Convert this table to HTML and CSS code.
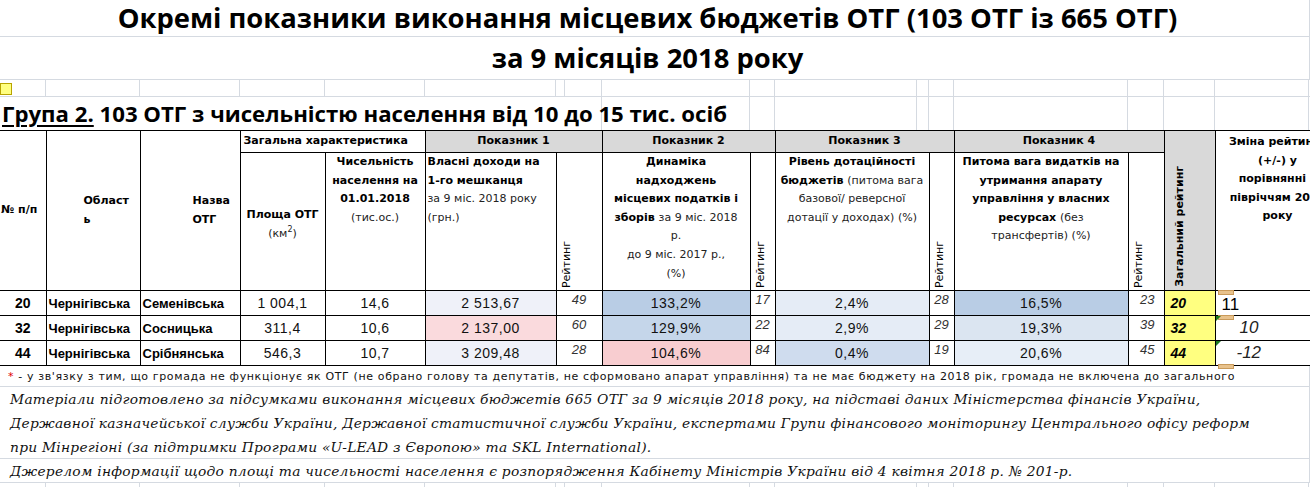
FILE: index.html
```html
<!DOCTYPE html>
<html lang="uk">
<head>
<meta charset="utf-8">
<title>Окремі показники виконання місцевих бюджетів ОТГ</title>
<link rel="stylesheet" href="styles.css">
</head>
<body>
<div class="sheet">
  <div class="title-row r1"><h1 class="title">Окремі показники виконання місцевих бюджетів ОТГ (103 ОТГ із 665 ОТГ)</h1></div>
  <div class="title-row r2"><h2 class="title">за 9 місяців 2018 року</h2></div>

  <div class="cols grid-row">
    <div class="gc"><span class="marker"></span></div><div class="gc"></div><div class="gc"></div><div class="gc"></div><div class="gc"></div><div class="gc"></div><div class="gc"></div><div class="gc"></div><div class="gc"></div><div class="gc"></div><div class="gc"></div><div class="gc"></div><div class="gc"></div><div class="gc"></div><div class="gc"></div><div class="gc"></div><div class="gc"></div><div class="gc last"></div>
  </div>

  <div class="cols group-row">
    <div class="gc group-text"><u>Група 2.</u> 103 ОТГ з чисельністю населення від 10 до 15 тис. осіб</div>
    <div class="gc"></div><div class="gc"></div><div class="gc"></div><div class="gc"></div><div class="gc"></div><div class="gc"></div><div class="gc"></div><div class="gc"></div><div class="gc"></div><div class="gc last"></div>
  </div>

  <table class="tbl">
    <colgroup>
      <col class="c-no"><col class="c-obl"><col class="c-name"><col class="c-area"><col class="c-pop">
      <col class="c-p1"><col class="c-r1"><col class="c-p2"><col class="c-r2"><col class="c-p3">
      <col class="c-r3"><col class="c-p4"><col class="c-r4"><col class="c-total"><col class="c-chg">
    </colgroup>
    <thead>
      <tr class="h1">
        <th rowspan="2" class="h-no">№ п/п</th>
        <th rowspan="2" class="h-obl">Област<br>ь</th>
        <th rowspan="2" class="h-name">Назва<br>ОТГ</th>
        <th colspan="2" class="h-gen">Загальна характеристика</th>
        <th colspan="2" class="h-grey">Показник 1</th>
        <th colspan="2" class="h-grey">Показник 2</th>
        <th colspan="2" class="h-grey">Показник 3</th>
        <th colspan="2" class="h-grey">Показник 4</th>
        <th rowspan="2" class="h-total"><div class="vert b">Загальний рейтинг</div></th>
        <th rowspan="2" class="h-chg">Зміна рейтингу<br>(+/-) у<br>порівнянні з<br>півріччям 2018<br>року</th>
      </tr>
      <tr class="h2">
        <th class="h-area">Площа ОТГ<br><span class="lt">(км<sup>2</sup>)</span></th>
        <th class="h-top">Чисельність<br>населення на<br>01.01.2018<br><span class="lt">(тис.ос.)</span></th>
        <th class="h-top h-left">Власні доходи на<br>1-го мешканця<br><span class="lt">за 9 міс. 2018 року<br>(грн.)</span></th>
        <th class="h-rt"><div class="vert">Рейтинг</div></th>
        <th class="h-top">Динаміка<br>надходжень<br>місцевих податків і<br>зборів <span class="lt">за 9 міс. 2018<br>р.<br>до 9 міс. 2017 р.,<br>(%)</span></th>
        <th class="h-rt"><div class="vert">Рейтинг</div></th>
        <th class="h-top">Рівень дотаційності<br>бюджетів <span class="lt">(питома вага<br>базової/ реверсної<br>дотації у доходах) (%)</span></th>
        <th class="h-rt"><div class="vert">Рейтинг</div></th>
        <th class="h-top">Питома вага видатків на<br>утримання апарату<br>управління у власних<br>ресурсах <span class="lt">(без<br>трансфертів) (%)</span></th>
        <th class="h-rt"><div class="vert">Рейтинг</div></th>
      </tr>
    </thead>
    <tbody>
      <tr>
        <td class="no">20</td><td class="obl">Чернігівська</td><td class="name">Семенівська</td>
        <td class="num">1 004,1</td><td class="num">14,6</td>
        <td class="num bg-lav">2 513,67</td><td class="rt">49</td>
        <td class="num bg-b1">133,2%</td><td class="rt">17</td>
        <td class="num bg-b3">2,4%</td><td class="rt">28</td>
        <td class="num bg-b1">16,5%</td><td class="rt rt4">23</td>
        <td class="total">20</td><td class="chg chg-plain"><span class="cmt"></span>11</td>
      </tr>
      <tr>
        <td class="no">32</td><td class="obl">Чернігівська</td><td class="name">Сосницька</td>
        <td class="num">311,4</td><td class="num">10,6</td>
        <td class="num bg-pink">2 137,00</td><td class="rt">60</td>
        <td class="num bg-b2">129,9%</td><td class="rt">22</td>
        <td class="num bg-b3">2,9%</td><td class="rt">29</td>
        <td class="num bg-b4">19,3%</td><td class="rt rt4">39</td>
        <td class="total">32</td><td class="chg chg-it"><span class="cmt"></span><span class="flag"></span>10</td>
      </tr>
      <tr>
        <td class="no">44</td><td class="obl">Чернігівська</td><td class="name">Срібнянська</td>
        <td class="num">546,3</td><td class="num">10,7</td>
        <td class="num bg-lav">3 209,48</td><td class="rt">28</td>
        <td class="num bg-pink2">104,6%</td><td class="rt">84</td>
        <td class="num bg-b5">0,4%</td><td class="rt">19</td>
        <td class="num bg-b6">20,6%</td><td class="rt rt4">45</td>
        <td class="total">44</td><td class="chg chg-it2"><span class="flag"></span>-12<span class="cmt cmt-low"></span></td>
      </tr>
    </tbody>
  </table>

  <div class="note note-star"><span class="star">*</span> - у зв'язку з тим, що громада не функціонує як ОТГ (не обрано голову та депутатів, не сформовано апарат управління) та не має бюджету на 2018 рік, громада не включена до загального</div>
  <div class="note note-main">Матеріали підготовлено за підсумками виконання місцевих бюджетів 665 ОТГ за 9 місяців 2018 року, на підставі даних Міністерства фінансів України,<br>Державної казначейської служби України, Державної статистичної служби України, експертами Групи фінансового моніторингу Центрального офісу реформ<br>при Мінрегіоні (за підтримки Програми «U-LEAD з Європою» та SKL International).</div>
  <div class="note note-src">Джерелом інформації щодо площі та чисельності населення є розпорядження Кабінету Міністрів України від 4 квітня 2018 р. № 201-р.</div>

  <div class="cols grid-row tail">
    <div class="gc"></div><div class="gc"></div><div class="gc"></div><div class="gc"></div><div class="gc"></div><div class="gc"></div><div class="gc"></div><div class="gc"></div><div class="gc"></div><div class="gc"></div><div class="gc"></div><div class="gc"></div><div class="gc"></div><div class="gc"></div><div class="gc"></div><div class="gc"></div><div class="gc"></div><div class="gc last"></div>
  </div>
</div>
</body>
</html>
```

FILE: styles.css
```css
* { box-sizing: border-box; }
html, body { margin: 0; padding: 0; background: #fff; }
body {
  width: 1310px;
  height: 487px;
  overflow: hidden;
  font-family: "DejaVu Sans", sans-serif;
  color: #000;
}
.sheet { width: 1310px; overflow: hidden; }

/* title rows */
.title-row {
  width: 1310px;
  display: flex;
  align-items: center;
  justify-content: center;
  padding-right: 14px;
  border-right: 1px solid #d5dae1;
  border-bottom: 1px solid #d5dae1;
}
.r1 { height: 37px; }
.r2 { height: 43px; }
.title {
  margin: 0;
  font-family: "Open Sans", sans-serif;
  font-weight: 700;
  font-size: 27.4px;
  line-height: 1;
  white-space: nowrap;
}

/* spreadsheet grid rows */
.cols {
  display: grid;
  grid-template-columns: 46px 94px 100px 85px 100px 131px 9px 37px 148px 25px 142px 12px 25px 174px 36px 51px 94px 1px;
}
.gc { border-right: 1px solid #d5dae1; position: relative; }
.gc.last { border-right: none; }
.grid-row { height: 17px; border-bottom: 1px solid #d5dae1; }
.grid-row.tail { height: 8px; border-bottom: none; }
.marker {
  position: absolute;
  left: 0;
  top: 3px;
  width: 12px;
  height: 12px;
  background: #ffff80;
  border: 1px solid #b8a400;
}
.group-row { height: 33px; }
.group-text {
  grid-column: 1 / 9;
  font-family: "Open Sans", sans-serif;
  font-weight: 700;
  font-size: 22.2px;
  line-height: 33px;
  padding-left: 2px;
  white-space: nowrap;
}
.group-text u { text-underline-offset: 3px; text-decoration-thickness: 2px; }

/* table */
.tbl {
  border-collapse: collapse;
  table-layout: fixed;
  width: 1340px;
}
.c-no { width: 46px; }
.c-obl { width: 94px; }
.c-name { width: 100px; }
.c-area { width: 85px; }
.c-pop { width: 100px; }
.c-p1 { width: 131px; }
.c-r1 { width: 46px; }
.c-p2 { width: 148px; }
.c-r2 { width: 25px; }
.c-p3 { width: 154px; }
.c-r3 { width: 25px; }
.c-p4 { width: 174px; }
.c-r4 { width: 36px; }
.c-total { width: 51px; }
.c-chg { width: 125px; }

.tbl th, .tbl td {
  border: 1px solid #000;
  padding: 0;
  overflow: hidden;
}
.tbl th:first-child, .tbl td:first-child { border-left: none; }
.tbl th {
  font-family: "DejaVu Sans", sans-serif;
  font-weight: 700;
  font-size: 11px;
  line-height: 18.6px;
}
.tbl .h1 { height: 22px; }
.tbl .h2 { height: 138px; }
.tbl .h-no { text-align: left; padding-left: 1px; }
.tbl .h-obl { text-align: left; padding-left: 37px; }
.tbl .h-name { text-align: left; padding-left: 52px; }
.tbl .h-gen { text-align: left; padding-left: 3px; white-space: nowrap; }
.tbl .h-grey { background: #d9d9d9; text-align: center; }
.tbl .h-total { background: #d9d9d9; vertical-align: bottom; text-align: left; padding: 0 0 3px 8px; }
.tbl .h-chg { vertical-align: top; text-align: center; padding-top: 2px; white-space: nowrap; }
.tbl .h-area { vertical-align: middle; text-align: center; padding-top: 6px; }
.tbl .h-top { vertical-align: top; text-align: center; }
.tbl .h-left { text-align: left; padding-left: 2px; }
.tbl .h-rt { vertical-align: bottom; text-align: left; padding: 0 0 2px 3px; }
.lt { font-weight: 400; color: #222; }
.lt sup { font-size: 8px; line-height: 0; }
.vert {
  writing-mode: vertical-rl;
  transform: rotate(180deg);
  font-weight: 400;
  white-space: nowrap;
  line-height: 14px;
}
.vert.b { font-weight: 700; }

.tbl tbody tr { height: 25px; }
.tbl td {
  font-family: "Liberation Sans", Arial, sans-serif;
  font-size: 14px;
  vertical-align: middle;
}
.tbl .no { font-weight: 700; text-align: center; }
.tbl .obl, .tbl .name {
  font-weight: 700;
  font-size: 13px;
  padding-left: 2px;
  white-space: nowrap;
}
.tbl .num { text-align: center; letter-spacing: 0.5px; color: #111; }
.tbl .rt {
  font-style: italic;
  font-size: 13px;
  color: #333;
  text-align: center;
  vertical-align: top;
  padding-top: 1px;
}
.tbl .rt4 { text-align: right; padding-right: 9px; }
.tbl .total {
  background: #ffff80;
  font-weight: 700;
  font-style: italic;
  padding-left: 6px;
}
.tbl .chg { position: relative; overflow: visible; }
.tbl .chg-plain { font-size: 17px; padding-left: 6px; vertical-align: bottom; line-height: 20px; }
.tbl .chg-it { font-style: italic; font-size: 17px; padding-left: 24px; color: #222; }
.tbl .chg-it2 { font-style: italic; font-size: 17px; padding-left: 21px; color: #222; }
.cmt {
  position: absolute;
  left: 2px;
  top: -1px;
  width: 16px;
  height: 5px;
  background: #e8c28c;
  border: 1px solid #c99a5a;
}
.cmt-low { top: auto; bottom: -4px; }
.flag {
  position: absolute;
  left: 0;
  top: 0;
  width: 0;
  height: 0;
  border-top: 5px solid #1e7b1e;
  border-right: 5px solid transparent;
}

.bg-lav { background: #eff1f9; }
.bg-pink { background: #fadadd; }
.bg-pink2 { background: #f8cdd0; }
.bg-b1 { background: #b9cde5; }
.bg-b2 { background: #c5d6ea; }
.bg-b3 { background: #e5ecf6; }
.bg-b4 { background: #dbe5f1; }
.bg-b5 { background: #cfdcee; }
.bg-b6 { background: #e7eef7; }

/* notes */
.note {
  width: 1310px;
  border-right: 1px solid #d5dae1;
  border-bottom: 1px solid #d5dae1;
  white-space: nowrap;
  overflow: hidden;
}
.note-star {
  height: 21px;
  font-family: "DejaVu Sans", sans-serif;
  font-size: 11px;
  line-height: 21px;
  padding-left: 8px;
  letter-spacing: 0.63px;
  color: #111;
}
.star { color: #e00000; }
.note-main, .note-src {
  font-family: "DejaVu Serif", serif;
  font-style: italic;
  font-size: 13.8px;
  letter-spacing: 0.25px;
  line-height: 24px;
  padding-left: 10px;
  color: #111;
}
.note-main { height: 72px; }
.note-src { height: 24px; }
```
